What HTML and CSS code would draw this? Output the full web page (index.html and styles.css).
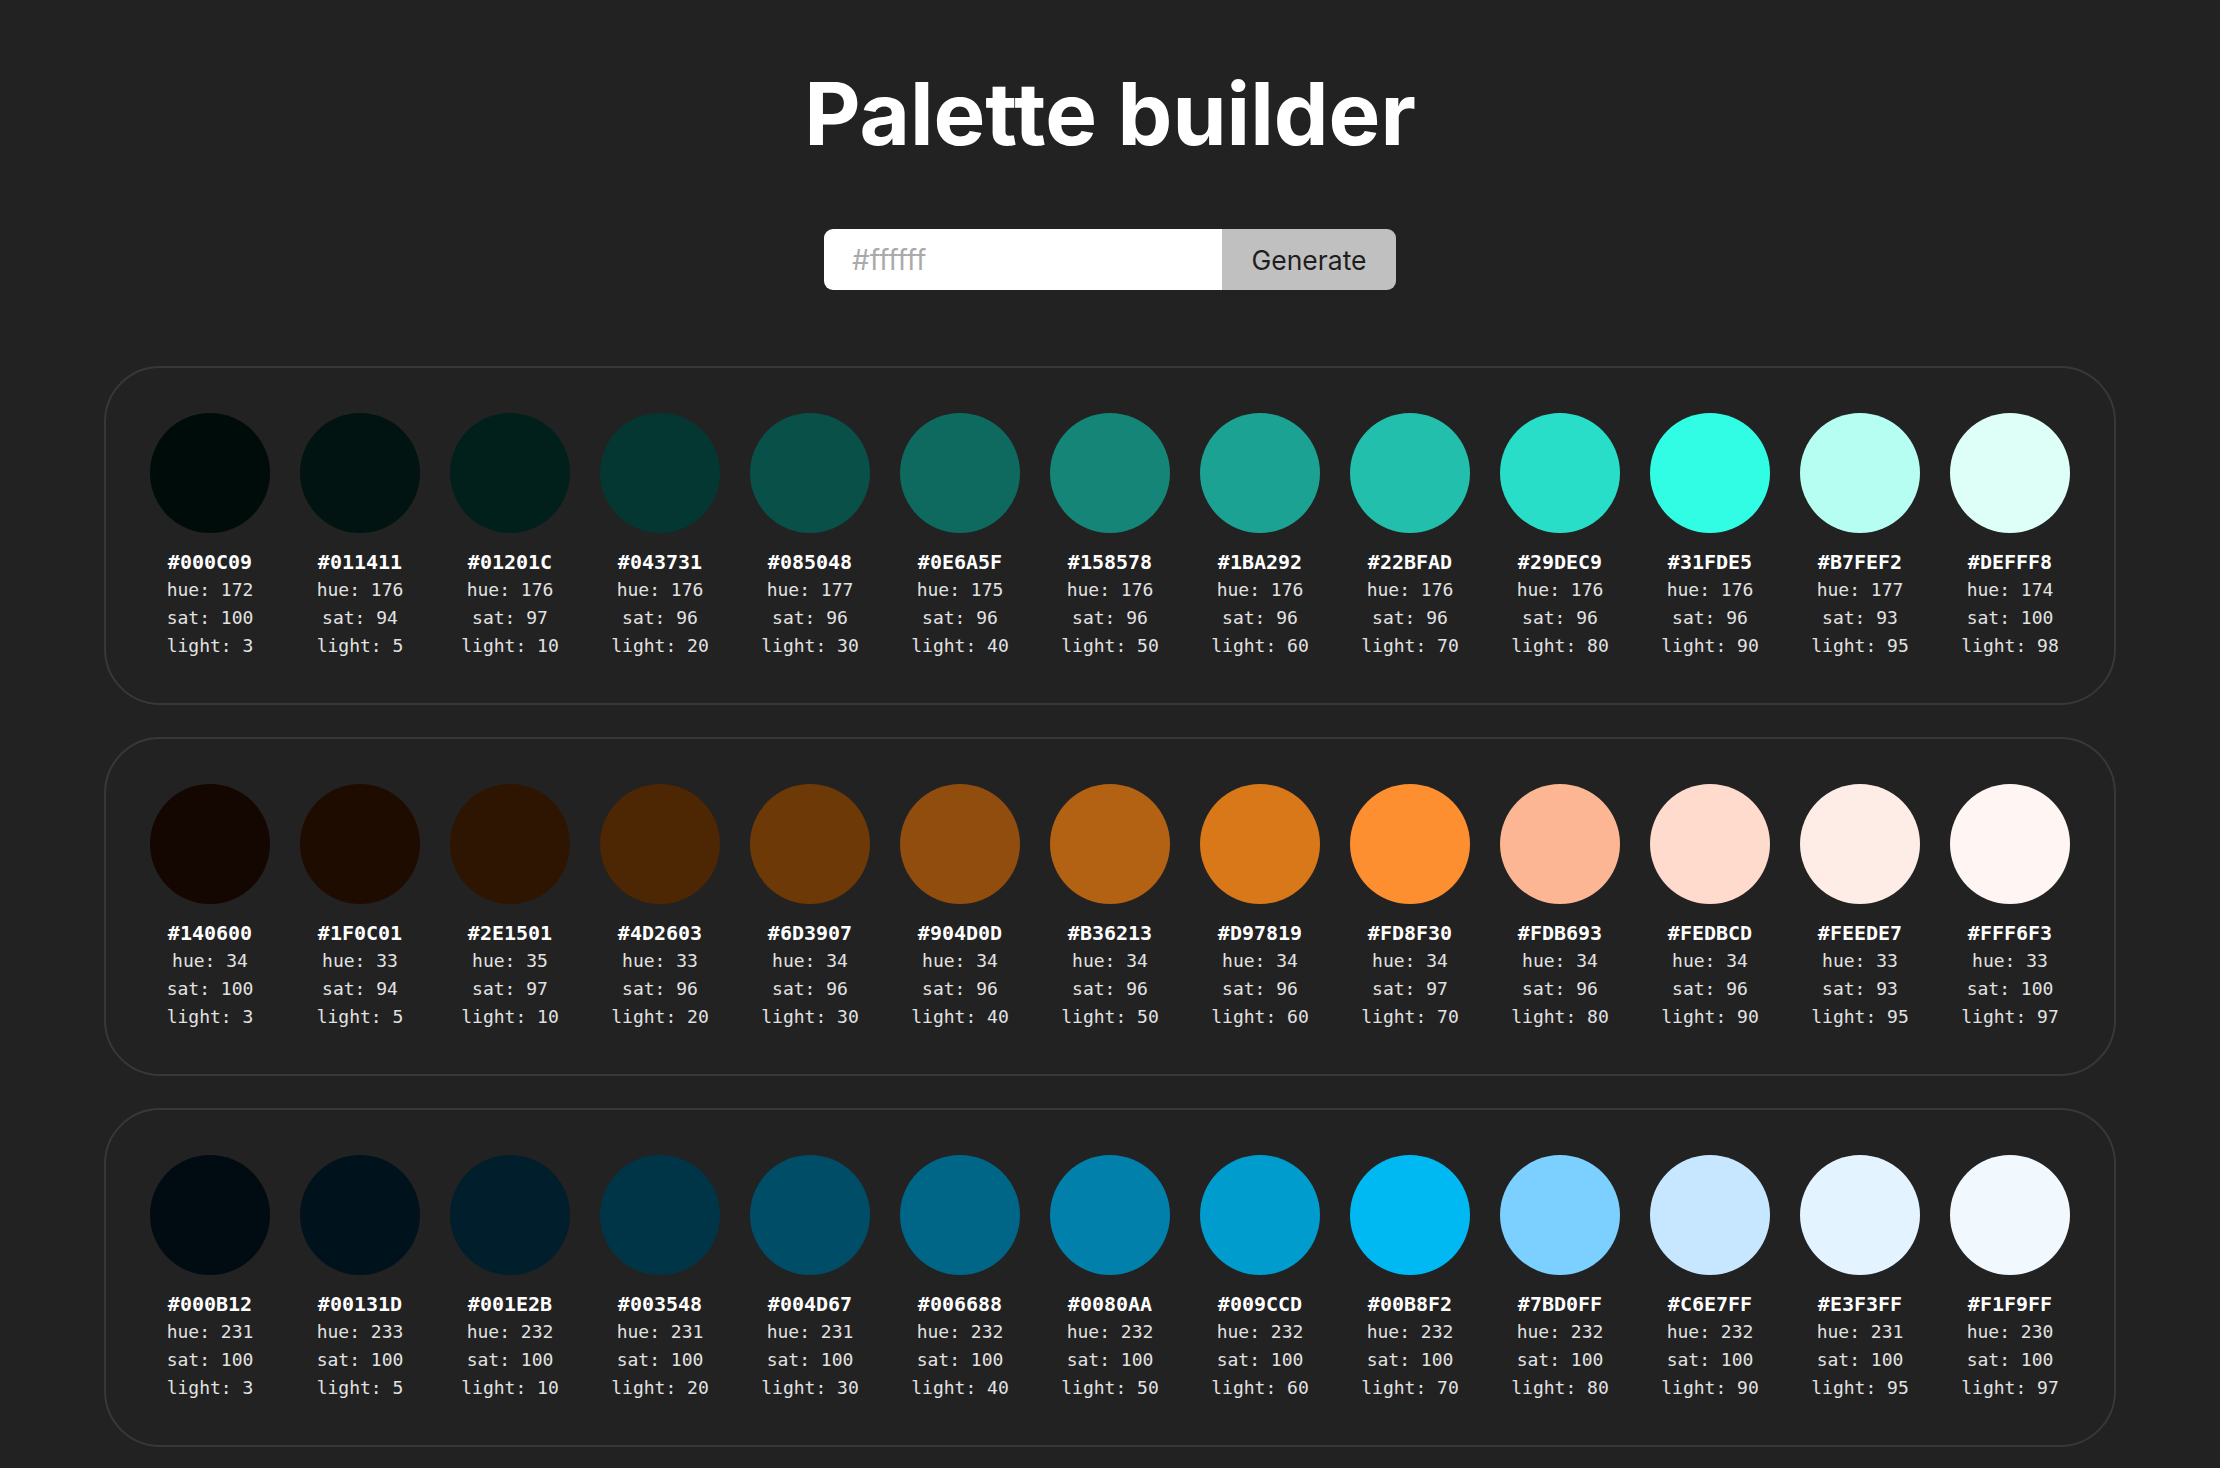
FILE: index.html
```html
<!DOCTYPE html>
<html lang="en">
<head>
<meta charset="utf-8">
<title>Palette builder</title>
<link rel="stylesheet" href="styles.css">
</head>
<body>
<main class="page">
  <h1 class="title">Palette builder</h1>
  <form class="picker">
    <input class="picker-input" type="text" placeholder="#ffffff">
    <button class="picker-button" type="button">Generate</button>
  </form>
  <section class="palettes">
    <div class="palette">
      <div class="swatch"><div class="swatch-dot" style="background:#000C09"></div><div class="swatch-hex">#000C09</div><div class="swatch-info">hue: 172</div><div class="swatch-info">sat: 100</div><div class="swatch-info">light: 3</div></div>
      <div class="swatch"><div class="swatch-dot" style="background:#011411"></div><div class="swatch-hex">#011411</div><div class="swatch-info">hue: 176</div><div class="swatch-info">sat: 94</div><div class="swatch-info">light: 5</div></div>
      <div class="swatch"><div class="swatch-dot" style="background:#01201C"></div><div class="swatch-hex">#01201C</div><div class="swatch-info">hue: 176</div><div class="swatch-info">sat: 97</div><div class="swatch-info">light: 10</div></div>
      <div class="swatch"><div class="swatch-dot" style="background:#043731"></div><div class="swatch-hex">#043731</div><div class="swatch-info">hue: 176</div><div class="swatch-info">sat: 96</div><div class="swatch-info">light: 20</div></div>
      <div class="swatch"><div class="swatch-dot" style="background:#085048"></div><div class="swatch-hex">#085048</div><div class="swatch-info">hue: 177</div><div class="swatch-info">sat: 96</div><div class="swatch-info">light: 30</div></div>
      <div class="swatch"><div class="swatch-dot" style="background:#0E6A5F"></div><div class="swatch-hex">#0E6A5F</div><div class="swatch-info">hue: 175</div><div class="swatch-info">sat: 96</div><div class="swatch-info">light: 40</div></div>
      <div class="swatch"><div class="swatch-dot" style="background:#158578"></div><div class="swatch-hex">#158578</div><div class="swatch-info">hue: 176</div><div class="swatch-info">sat: 96</div><div class="swatch-info">light: 50</div></div>
      <div class="swatch"><div class="swatch-dot" style="background:#1BA292"></div><div class="swatch-hex">#1BA292</div><div class="swatch-info">hue: 176</div><div class="swatch-info">sat: 96</div><div class="swatch-info">light: 60</div></div>
      <div class="swatch"><div class="swatch-dot" style="background:#22BFAD"></div><div class="swatch-hex">#22BFAD</div><div class="swatch-info">hue: 176</div><div class="swatch-info">sat: 96</div><div class="swatch-info">light: 70</div></div>
      <div class="swatch"><div class="swatch-dot" style="background:#29DEC9"></div><div class="swatch-hex">#29DEC9</div><div class="swatch-info">hue: 176</div><div class="swatch-info">sat: 96</div><div class="swatch-info">light: 80</div></div>
      <div class="swatch"><div class="swatch-dot" style="background:#31FDE5"></div><div class="swatch-hex">#31FDE5</div><div class="swatch-info">hue: 176</div><div class="swatch-info">sat: 96</div><div class="swatch-info">light: 90</div></div>
      <div class="swatch"><div class="swatch-dot" style="background:#B7FEF2"></div><div class="swatch-hex">#B7FEF2</div><div class="swatch-info">hue: 177</div><div class="swatch-info">sat: 93</div><div class="swatch-info">light: 95</div></div>
      <div class="swatch"><div class="swatch-dot" style="background:#DEFFF8"></div><div class="swatch-hex">#DEFFF8</div><div class="swatch-info">hue: 174</div><div class="swatch-info">sat: 100</div><div class="swatch-info">light: 98</div></div>
    </div>
    <div class="palette">
      <div class="swatch"><div class="swatch-dot" style="background:#140600"></div><div class="swatch-hex">#140600</div><div class="swatch-info">hue: 34</div><div class="swatch-info">sat: 100</div><div class="swatch-info">light: 3</div></div>
      <div class="swatch"><div class="swatch-dot" style="background:#1F0C01"></div><div class="swatch-hex">#1F0C01</div><div class="swatch-info">hue: 33</div><div class="swatch-info">sat: 94</div><div class="swatch-info">light: 5</div></div>
      <div class="swatch"><div class="swatch-dot" style="background:#2E1501"></div><div class="swatch-hex">#2E1501</div><div class="swatch-info">hue: 35</div><div class="swatch-info">sat: 97</div><div class="swatch-info">light: 10</div></div>
      <div class="swatch"><div class="swatch-dot" style="background:#4D2603"></div><div class="swatch-hex">#4D2603</div><div class="swatch-info">hue: 33</div><div class="swatch-info">sat: 96</div><div class="swatch-info">light: 20</div></div>
      <div class="swatch"><div class="swatch-dot" style="background:#6D3907"></div><div class="swatch-hex">#6D3907</div><div class="swatch-info">hue: 34</div><div class="swatch-info">sat: 96</div><div class="swatch-info">light: 30</div></div>
      <div class="swatch"><div class="swatch-dot" style="background:#904D0D"></div><div class="swatch-hex">#904D0D</div><div class="swatch-info">hue: 34</div><div class="swatch-info">sat: 96</div><div class="swatch-info">light: 40</div></div>
      <div class="swatch"><div class="swatch-dot" style="background:#B36213"></div><div class="swatch-hex">#B36213</div><div class="swatch-info">hue: 34</div><div class="swatch-info">sat: 96</div><div class="swatch-info">light: 50</div></div>
      <div class="swatch"><div class="swatch-dot" style="background:#D97819"></div><div class="swatch-hex">#D97819</div><div class="swatch-info">hue: 34</div><div class="swatch-info">sat: 96</div><div class="swatch-info">light: 60</div></div>
      <div class="swatch"><div class="swatch-dot" style="background:#FD8F30"></div><div class="swatch-hex">#FD8F30</div><div class="swatch-info">hue: 34</div><div class="swatch-info">sat: 97</div><div class="swatch-info">light: 70</div></div>
      <div class="swatch"><div class="swatch-dot" style="background:#FDB693"></div><div class="swatch-hex">#FDB693</div><div class="swatch-info">hue: 34</div><div class="swatch-info">sat: 96</div><div class="swatch-info">light: 80</div></div>
      <div class="swatch"><div class="swatch-dot" style="background:#FEDBCD"></div><div class="swatch-hex">#FEDBCD</div><div class="swatch-info">hue: 34</div><div class="swatch-info">sat: 96</div><div class="swatch-info">light: 90</div></div>
      <div class="swatch"><div class="swatch-dot" style="background:#FEEDE7"></div><div class="swatch-hex">#FEEDE7</div><div class="swatch-info">hue: 33</div><div class="swatch-info">sat: 93</div><div class="swatch-info">light: 95</div></div>
      <div class="swatch"><div class="swatch-dot" style="background:#FFF6F3"></div><div class="swatch-hex">#FFF6F3</div><div class="swatch-info">hue: 33</div><div class="swatch-info">sat: 100</div><div class="swatch-info">light: 97</div></div>
    </div>
    <div class="palette">
      <div class="swatch"><div class="swatch-dot" style="background:#000B12"></div><div class="swatch-hex">#000B12</div><div class="swatch-info">hue: 231</div><div class="swatch-info">sat: 100</div><div class="swatch-info">light: 3</div></div>
      <div class="swatch"><div class="swatch-dot" style="background:#00131D"></div><div class="swatch-hex">#00131D</div><div class="swatch-info">hue: 233</div><div class="swatch-info">sat: 100</div><div class="swatch-info">light: 5</div></div>
      <div class="swatch"><div class="swatch-dot" style="background:#001E2B"></div><div class="swatch-hex">#001E2B</div><div class="swatch-info">hue: 232</div><div class="swatch-info">sat: 100</div><div class="swatch-info">light: 10</div></div>
      <div class="swatch"><div class="swatch-dot" style="background:#003548"></div><div class="swatch-hex">#003548</div><div class="swatch-info">hue: 231</div><div class="swatch-info">sat: 100</div><div class="swatch-info">light: 20</div></div>
      <div class="swatch"><div class="swatch-dot" style="background:#004D67"></div><div class="swatch-hex">#004D67</div><div class="swatch-info">hue: 231</div><div class="swatch-info">sat: 100</div><div class="swatch-info">light: 30</div></div>
      <div class="swatch"><div class="swatch-dot" style="background:#006688"></div><div class="swatch-hex">#006688</div><div class="swatch-info">hue: 232</div><div class="swatch-info">sat: 100</div><div class="swatch-info">light: 40</div></div>
      <div class="swatch"><div class="swatch-dot" style="background:#0080AA"></div><div class="swatch-hex">#0080AA</div><div class="swatch-info">hue: 232</div><div class="swatch-info">sat: 100</div><div class="swatch-info">light: 50</div></div>
      <div class="swatch"><div class="swatch-dot" style="background:#009CCD"></div><div class="swatch-hex">#009CCD</div><div class="swatch-info">hue: 232</div><div class="swatch-info">sat: 100</div><div class="swatch-info">light: 60</div></div>
      <div class="swatch"><div class="swatch-dot" style="background:#00B8F2"></div><div class="swatch-hex">#00B8F2</div><div class="swatch-info">hue: 232</div><div class="swatch-info">sat: 100</div><div class="swatch-info">light: 70</div></div>
      <div class="swatch"><div class="swatch-dot" style="background:#7BD0FF"></div><div class="swatch-hex">#7BD0FF</div><div class="swatch-info">hue: 232</div><div class="swatch-info">sat: 100</div><div class="swatch-info">light: 80</div></div>
      <div class="swatch"><div class="swatch-dot" style="background:#C6E7FF"></div><div class="swatch-hex">#C6E7FF</div><div class="swatch-info">hue: 232</div><div class="swatch-info">sat: 100</div><div class="swatch-info">light: 90</div></div>
      <div class="swatch"><div class="swatch-dot" style="background:#E3F3FF"></div><div class="swatch-hex">#E3F3FF</div><div class="swatch-info">hue: 231</div><div class="swatch-info">sat: 100</div><div class="swatch-info">light: 95</div></div>
      <div class="swatch"><div class="swatch-dot" style="background:#F1F9FF"></div><div class="swatch-hex">#F1F9FF</div><div class="swatch-info">hue: 230</div><div class="swatch-info">sat: 100</div><div class="swatch-info">light: 97</div></div>
    </div>
  </section>
</main>
</body>
</html>
```

FILE: styles.css
```css
html, body {
  margin: 0;
  background: #222222;
}

.page {
  padding: 61px 104px 0;
  display: flex;
  flex-direction: column;
  align-items: center;
  font-family: Inter, "Noto Sans", sans-serif;
  color: #ffffff;
}

.title {
  margin: 0 0 63px;
  font-size: 87px;
  font-weight: 700;
  line-height: normal;
  color: #ffffff;
}

.picker {
  display: flex;
  height: 61px;
  width: 572px;
  border-radius: 9px;
  overflow: hidden;
  margin: 0 0 76px;
}

.picker-input {
  flex: 1 1 auto;
  min-width: 0;
  border: none;
  outline: none;
  margin: 0;
  padding: 0 28px;
  background: #ffffff;
  font-family: Inter, "Noto Sans", sans-serif;
  font-size: 28px;
  color: #222222;
}

.picker-input::placeholder {
  color: #aaaaaa;
}

.picker-button {
  flex: 0 0 174px;
  border: none;
  margin: 0;
  padding: 0;
  background: #c0c0c0;
  font-family: Inter, "Noto Sans", sans-serif;
  font-size: 26.5px;
  color: #1e1e1e;
}

.palettes {
  align-self: stretch;
  display: flex;
  flex-direction: column;
  gap: 32px;
}

.palette {
  display: flex;
  justify-content: center;
  gap: 30px;
  padding: 45px 0 43px;
  border: 2px solid #383838;
  border-radius: 56px;
}

.swatch {
  width: 120px;
  display: flex;
  flex-direction: column;
  align-items: center;
  font-family: "DejaVu Sans Mono", "Liberation Mono", monospace;
  line-height: 28px;
  white-space: nowrap;
}

.swatch-dot {
  width: 120px;
  height: 120px;
  border-radius: 50%;
  margin-bottom: 15px;
}

.swatch-hex {
  font-size: 20px;
  font-weight: 700;
  color: #ffffff;
}

.swatch-info {
  font-size: 18px;
  color: #e2e2e2;
}
```
